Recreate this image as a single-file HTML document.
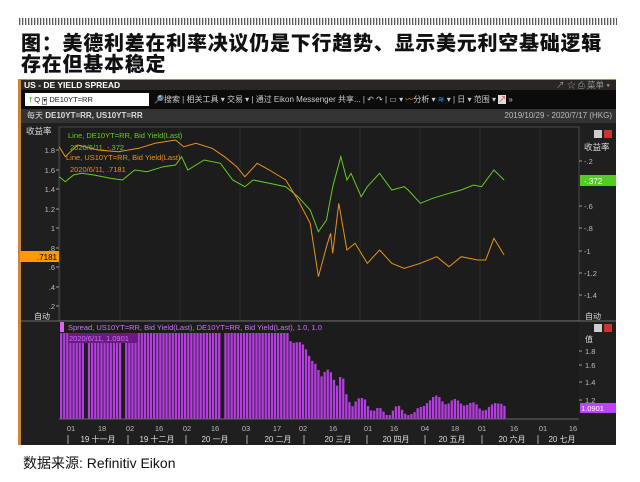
<!DOCTYPE html>
<html><head><meta charset="utf-8"><style>
*{margin:0;padding:0;box-sizing:border-box}
body{width:640px;height:482px;background:#fff;position:relative;overflow:hidden;font-family:"Liberation Sans","Noto Sans CJK SC",sans-serif}
.dots{position:absolute;left:19px;top:18px;width:598px;height:7px;background:repeating-linear-gradient(90deg,#555 0 1px,#ccc 1px 2px,#fff 2px 3px)}
.t{position:absolute;left:21px;font-weight:900;font-size:20px;color:#111;letter-spacing:0.75px;line-height:20px;font-family:"Noto Sans CJK SC",sans-serif}
.win{position:absolute;left:18px;top:79px;width:598px;height:366px;background:#1f1f1f;border-left:3px solid #c8863a}
.tb{position:absolute;left:0;top:0;width:595px;height:11px;background:#2a2622;color:#fff;font-size:8.5px;font-weight:bold;padding-left:3px;line-height:11px;border-top:1px solid #c8863a}
.tool{position:absolute;left:0;top:11px;width:595px;height:19px;background:#0b0b0b;color:#ccc;font-size:8px;line-height:19px}
.inp{position:absolute;left:4px;top:3px;width:124px;height:13px;background:#fff;color:#222;font-size:7.5px;line-height:13px;padding-left:4px}
.info{position:absolute;left:0;top:30px;width:595px;height:14px;background:#333;color:#ddd;font-size:8px;line-height:14px}
.cap{position:absolute;left:23px;top:453px;font-size:14px;color:#111}
svg text{font-family:"Liberation Sans","Noto Sans CJK SC",sans-serif}
</style></head><body>
<div class="dots"></div>
<div class="t" style="top:32px">图：美德利差在利率决议仍是下行趋势、显示美元利空基础逻辑</div>
<div class="t" style="top:53px">存在但基本稳定</div>
<div class="win">
<div class="tb">US - DE YIELD SPREAD<span style="position:absolute;right:6px;font-weight:normal;color:#999">↗ ☆ ⎙ 菜单 ▾</span></div>
<div class="tool"><div class="inp"><span style="color:#3a3">🠕</span> Q <span style="border:1px solid #888;font-size:6px">▾</span> DE10YT=RR</div>
<span style="position:absolute;left:133px">🔎搜索 | 相关工具 ▾ 交易 ▾ | 通过 Eikon Messenger 共享... | ↶ ↷ | ▭ ▾ <span style="color:#f90">〰</span>分析 ▾ <span style="color:#39f">≋</span> ▾ | 日 ▾ 范围 ▾ <span style="background:#ddd;color:#d33">↗</span> »</span></div>
<div class="info"><span style="position:absolute;left:6px">每天 <b>DE10YT=RR, US10YT=RR</b></span><span style="position:absolute;right:4px;color:#bbb">2019/10/29 - 2020/7/17 (HKG)</span></div>
</div>
<svg id="s" style="position:absolute;left:0;top:0" width="640" height="482"></svg>
<div class="cap">数据来源: Refinitiv Eikon</div>
<script>
var s=document.getElementById('s'),h='';
function T(x,y,t,c,sz,a){h+='<text x="'+x+'" y="'+y+'" fill="'+(c||'#ccc')+'" font-size="'+(sz||8)+'"'+(a?' text-anchor="'+a+'"':'')+'>'+t+'</text>';}
h+='<rect x="59" y="127" width="520" height="194" fill="#1c1c1c" stroke="#666" stroke-width="0.6"/>';
h+='<rect x="59" y="321" width="520" height="98" fill="#1c1c1c"/>';
h+='<line x1="21" y1="321" x2="616" y2="321" stroke="#888" stroke-width="0.8"/>';
for(var gx=60;gx<579;gx+=60)h+='<line x1="'+gx+'" y1="128" x2="'+gx+'" y2="320" stroke="#2a2a2a"/>';
T(26,134,'收益率','#ddd',8.5);T(584,150,'收益率','#ddd',8.5);
var L=[['1.8',150],['1.6',170],['1.4',189],['1.2',209],['1',228],['.8',248],['.6',267],['.4',287],['.2',306]];
L.forEach(function(l){T(55,l[1]+3,l[0],'#bbb',7.5,'end');h+='<line x1="56" y1="'+l[1]+'" x2="59" y2="'+l[1]+'" stroke="#999"/>';});
var R=[['-.2',161],['-.6',206],['-.8',228],['-1',251],['-1.2',273],['-1.4',295]];
R.forEach(function(l){T(584,l[1]+3,l[0],'#bbb',7.5);h+='<line x1="579" y1="'+l[1]+'" x2="582" y2="'+l[1]+'" stroke="#999"/>';});
h+='<rect x="580" y="175" width="36" height="11" fill="#5c2"/>';T(584,184,'-.372','#fff',8);
h+='<rect x="20" y="251" width="39" height="11" fill="#f90"/>';T(57,260,'.7181','#000',8,'end');
h+='<rect x="594" y="130" width="8" height="8" fill="#ccc"/><rect x="604" y="130" width="8" height="8" fill="#c33"/>';
h+='<rect x="594" y="324" width="8" height="8" fill="#ccc"/><rect x="604" y="324" width="8" height="8" fill="#c33"/>';
T(34,319,'自动','#ddd',8);T(585,319,'自动','#ddd',8);
function P(a,c){var d='';a.forEach(function(p,i){d+=(i?'L':'M')+(p[0]/2.45).toFixed(1)+' '+(p[1]/3+120).toFixed(1);});h+='<path d="'+d+'" fill="none" stroke="'+c+'" stroke-width="1"/>';}
P([[145,170],[160,185],[180,165],[200,160],[230,165],[270,175],[300,180],[330,150],[360,155],[400,140],[430,135],[445,110],[460,150],[500,120],[540,130],[570,180],[600,200],[620,180],[660,190],[700,200],[730,230],[760,270],[780,335],[800,300],[815,200],[835,110],[850,180],[860,160],[885,230],[900,200],[930,160],[960,210],[990,200],[1000,210],[1030,250],[1060,235],[1100,220],[1130,210],[1160,195],[1180,200],[1210,150],[1235,180]],'#6c2');
P([[145,80],[160,110],[190,75],[240,90],[290,95],[340,85],[380,70],[430,60],[450,80],[480,70],[520,85],[550,110],[580,140],[600,170],[630,130],[660,150],[700,180],[730,240],[760,310],[780,470],[800,380],[810,340],[815,400],[830,250],[850,390],[870,370],[900,430],[930,390],[960,430],[990,445],[1030,430],[1070,410],[1100,440],[1130,410],[1170,420],[1190,420],[1210,355],[1235,405]],'#e8921c');
T(68,138,'Line, DE10YT=RR, Bid Yield(Last)','#6c2',7.5);T(70,150,'2020/6/11, -.372','#6c2',7.5);
T(66,160,'Line, US10YT=RR, Bid Yield(Last)','#e8921c',7.5);T(70,172,'2020/6/11, .7181','#e8921c',7.5);
var K=[[287,333],[289,338],[306,350],[314,363],[320,380],[326,367],[331,370],[335,390],[341,375],[345,392],[351,405],[360,400],[364,398],[372,412],[380,410],[388,413],[397,408],[413,415],[426,400],[438,398],[446,402],[455,402],[467,403],[479,408],[492,407],[502,400],[506,410]];
function hy(x){if(x<287)return 333;for(var i=1;i<K.length;i++)if(x<=K[i][0]){var a=K[i-1],b=K[i];return a[1]+(b[1]-a[1])*(x-a[0])/(b[0]-a[0])+(Math.sin(x*1.7)*3);}return 410;}
for(var x=60;x<505;x+=3.1){if(Math.abs(x-85)<2||Math.abs(x-123)<2||Math.abs(x-221)<2)continue;var y=hy(x);h+='<rect x="'+x.toFixed(1)+'" y="'+y.toFixed(1)+'" width="2.3" height="'+(419-y).toFixed(1)+'" fill="#b43ce0"/>';}
h+='<rect x="60" y="322" width="4" height="10" fill="#e060ff"/>';
T(68,330,'Spread, US10YT=RR, Bid Yield(Last), DE10YT=RR, Bid Yield(Last),  1.0, 1.0','#d070ff',7.5);
h+='<rect x="68" y="333" width="70" height="10" fill="#6a1a80"/>';T(69,341,'2020/6/11, 1.0901','#d070ff',7.5);
T(585,342,'值','#ddd',8);
[['1.8',351],['1.6',365],['1.4',382],['1.2',400]].forEach(function(l){T(585,l[1]+3,l[0],'#bbb',7.5);h+='<line x1="579" y1="'+l[1]+'" x2="582" y2="'+l[1]+'" stroke="#999"/>';});
h+='<rect x="580" y="403" width="36" height="10" fill="#c040ff"/>';T(581,411,'1.0901','#fff',7.5);
h+='<line x1="59" y1="419" x2="579" y2="419" stroke="#666"/>';
var D=[['01',71],['18',102],['02',130],['16',159],['02',187],['16',215],['03',246],['17',277],['02',303],['16',333],['01',368],['16',394],['04',425],['18',455],['01',482],['16',514],['01',543],['16',573]];
D.forEach(function(d){T(d[1],431,d[0],'#bbb',7.5,'middle');});
var M=[['19 十一月',98],['19 十二月',157],['20 一月',215],['20 二月',278],['20 三月',338],['20 四月',396],['20 五月',452],['20 六月',512],['20 七月',562]];
M.forEach(function(m){T(m[1],442,m[0],'#ddd',8,'middle');});
[68,128,186,247,304,367,425,482,538].forEach(function(x){h+='<line x1="'+x+'" y1="435" x2="'+x+'" y2="444" stroke="#aaa"/>';});
s.innerHTML=h;
</script>
</body></html>
